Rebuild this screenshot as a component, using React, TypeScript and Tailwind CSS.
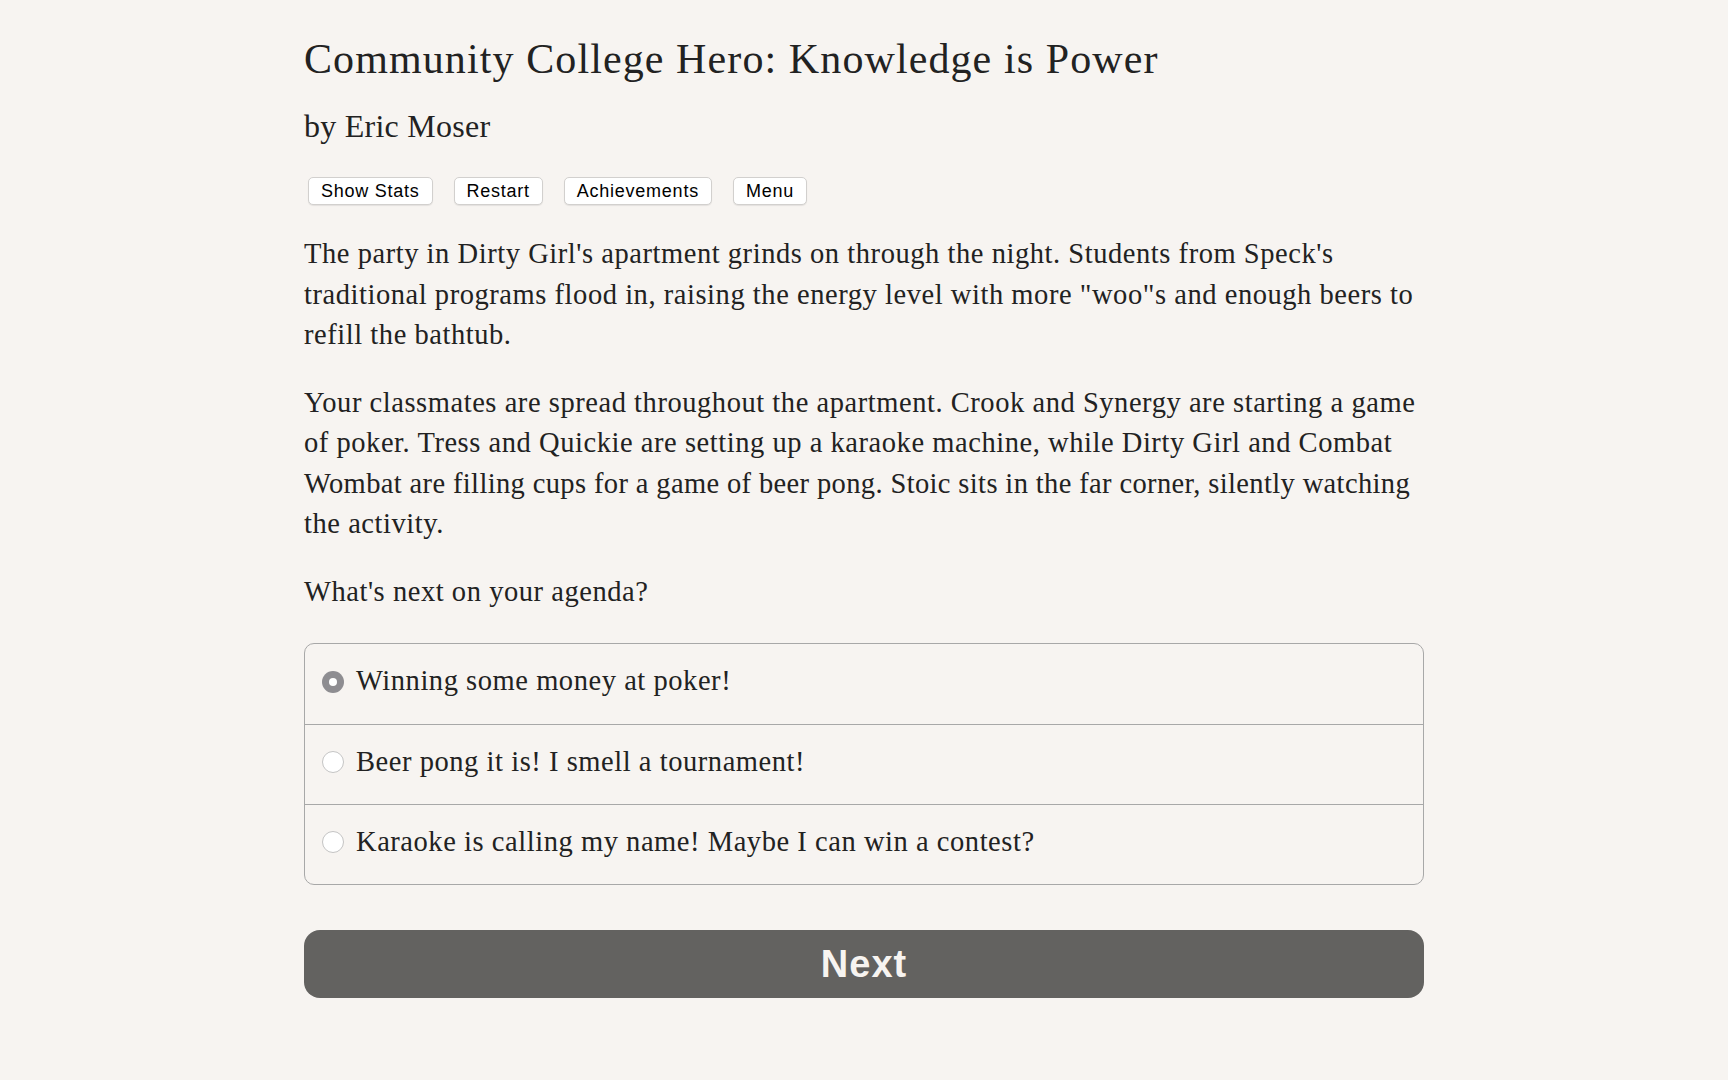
import React from "react";

const serif = "font-['Liberation_Serif','Times_New_Roman',serif]";
const sans = "font-['Liberation_Sans',Arial,sans-serif]";

const toolbar = ["Show Stats", "Restart", "Achievements", "Menu"];

const options = [
  { label: "Winning some money at poker!", checked: true },
  { label: "Beer pong it is! I smell a tournament!", checked: false },
  { label: "Karaoke is calling my name! Maybe I can win a contest?", checked: false },
];

const Radio = ({ checked }: { checked: boolean }) =>
  checked ? (
    <span className="flex h-[22px] w-[22px] shrink-0 items-center justify-center rounded-full bg-[#8e8d91]">
      <span className="h-[8px] w-[8px] rounded-full bg-white" />
    </span>
  ) : (
    <span className="h-[22px] w-[22px] shrink-0 rounded-full border border-[#c4c4c4] bg-white" />
  );

export default function App() {
  return (
    <div className={`min-h-[1080px] w-full bg-[#f7f4f1] text-[#222222] ${serif}`}>
      <div className="mx-auto w-[1120px] pt-[34px]">
        <h1 className="whitespace-nowrap text-[42px] leading-[50px] tracking-[1.1px]">
          Community College Hero: Knowledge is Power
        </h1>
        <h2 className="mt-[23px] text-[32px] leading-[38px] tracking-[0.25px]">by Eric Moser</h2>

        <div className="mt-[32px] flex gap-[21px] pl-[4px]">
          {toolbar.map((t) => (
            <button
              key={t}
              className={`h-[28px] rounded-[5px] border border-[#d2d0ce] bg-white px-[12px] text-[18px] leading-none tracking-[0.75px] text-black shadow-[0_1px_1px_rgba(0,0,0,0.08)] ${sans}`}
            >
              {t}
            </button>
          ))}
        </div>

        <div className="whitespace-nowrap text-[28.5px] leading-[40.5px] tracking-[0.55px]">
          <p className="mt-[29px]">
            The party in Dirty Girl's apartment grinds on through the night. Students from Speck's
            <br />
            traditional programs flood in, raising the energy level with more "woo"s and enough beers to
            <br />
            refill the bathtub.
          </p>
          <p className="mt-[27px]">
            Your classmates are spread throughout the apartment. Crook and Synergy are starting a game
            <br />
            of poker. Tress and Quickie are setting up a karaoke machine, while Dirty Girl and Combat
            <br />
            <span className="tracking-[0.37px]">
              Wombat are filling cups for a game of beer pong. Stoic sits in the far corner, silently watching
            </span>
            <br />
            the activity.
          </p>
          <p className="mt-[27px]">What's next on your agenda?</p>

          <div className="mt-[31px] overflow-hidden rounded-[10px] border border-[#a8a8a8]">
            {options.map((o, i) => (
              <div
                key={o.label}
                className={`flex h-[80px] items-center gap-[12px] pb-[5px] pl-[17px] ${i > 0 ? "border-t border-[#a8a8a8]" : ""}`}
              >
                <Radio checked={o.checked} />
                <span>{o.label}</span>
              </div>
            ))}
          </div>
        </div>

        <button
          className={`mt-[45px] flex h-[68px] w-full items-center justify-center rounded-[16px] bg-[#636260] text-[38px] font-bold tracking-[1px] text-[#f7f4f1] ${sans}`}
        >
          Next
        </button>
      </div>
    </div>
  );
}
